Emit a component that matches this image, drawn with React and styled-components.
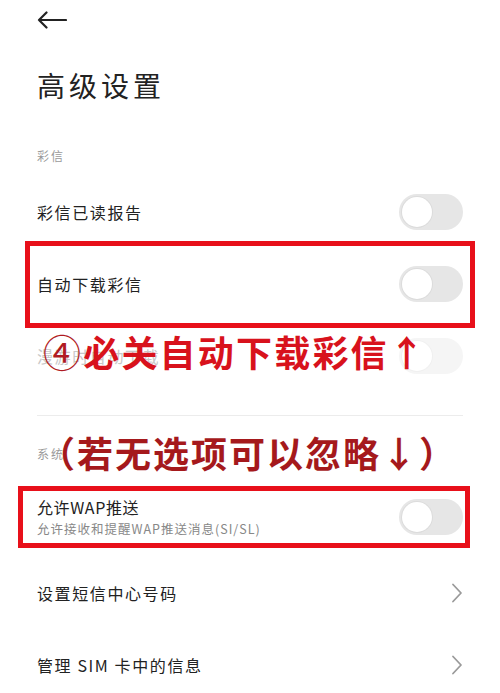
import React from "react";
import styled, { createGlobalStyle } from "styled-components";

const GlobalStyle = createGlobalStyle`
  html, body {
    margin: 0;
    padding: 0;
    background: #fff;
    overflow: hidden;
  }
  body {
    font-family: "Noto Sans CJK SC", "Noto Sans", sans-serif;
    color: #222;
  }
`;

const Page = styled.div`
  width: 500px;
  height: 693px;
  padding: 0 37px;
  box-sizing: border-box;
  overflow: hidden;
`;

const Header = styled.div`
  height: 40px;
  display: flex;
  align-items: center;
  svg {
    display: block;
  }
`;

const Title = styled.h1`
  margin: 25px 0 0;
  font-size: 28px;
  line-height: 40px;
  font-weight: 400;
  letter-spacing: 4px;
  color: #222;
`;

const SectionLabel = styled.div`
  position: relative;
  margin-top: ${(p) => p.top}px;
  margin-bottom: ${(p) => p.bottom}px;
  font-size: 12px;
  line-height: 18px;
  letter-spacing: 2px;
  color: #9a9a9a;
`;

const Row = styled.div`
  position: relative;
  height: ${(p) => (p.tall ? 80 : 72)}px;
  display: flex;
  align-items: center;
  justify-content: space-between;
`;

const RowText = styled.div`
  display: flex;
  flex-direction: column;
  gap: 4px;
`;

const RowTitle = styled.div`
  font-size: 16px;
  line-height: 20px;
  letter-spacing: ${(p) => (p.tight ? 0.6 : 1.6)}px;
  color: ${(p) => (p.disabled ? "#c8c8c8" : "#222")};
`;

const RowSub = styled.div`
  font-size: 12.5px;
  line-height: 16px;
  letter-spacing: 1px;
  color: #888;
`;

const Track = styled.div`
  width: 64px;
  height: 36px;
  border-radius: 18px;
  background: ${(p) => (p.disabled ? "#f5f5f5" : "#e6e6e6")};
  padding: 3px;
  box-sizing: border-box;
  flex-shrink: 0;
`;

const Knob = styled.div`
  width: 30px;
  height: 30px;
  border-radius: 50%;
  background: #fff;
  box-shadow: 0 0 0 1px ${(p) => (p.disabled ? "#f0f0f0" : "#dcdcdc")};
`;

const Divider = styled.div`
  margin-top: 23px;
  height: 1px;
  background: #ececec;
`;

const Frame = styled.div`
  position: absolute;
  top: ${(p) => p.t}px;
  bottom: ${(p) => p.b}px;
  left: ${(p) => p.l}px;
  right: ${(p) => p.r}px;
  border: 5px solid #e8101a;
  pointer-events: none;
`;

const Callout = styled.div`
  position: absolute;
  top: ${(p) => p.top}px;
  left: ${(p) => p.left}px;
  white-space: nowrap;
  font-size: 36px;
  line-height: 40px;
  font-weight: 700;
  letter-spacing: ${(p) => p.spacing || 0}px;
  color: ${(p) => p.color};
`;

const Circled = styled.span`
  font-weight: 400;
  font-size: 38px;
  color: #b01a22;
`;

const Switch = ({ disabled }) => (
  <Track disabled={disabled}>
    <Knob disabled={disabled} />
  </Track>
);

const Chevron = () => (
  <svg width="12" height="20" viewBox="0 0 12 20" fill="none">
    <path d="M2 1.5 L10 10 L2 18.5" stroke="#9a9a9a" strokeWidth="1.8" strokeLinecap="round" strokeLinejoin="round" />
  </svg>
);

const BackArrow = () => (
  <svg width="30" height="18" viewBox="0 0 30 18" fill="none">
    <path d="M29 9 H2 M9.5 1.5 L2 9 L9.5 16.5" stroke="#222" strokeWidth="2.2" strokeLinecap="round" strokeLinejoin="round" />
  </svg>
);

export default function App() {
  return (
    <>
      <GlobalStyle />
      <Page>
        <Header>
          <BackArrow />
        </Header>
        <Title>高级设置</Title>

        <SectionLabel top={42} bottom={11}>彩信</SectionLabel>
        <Row>
          <RowTitle>彩信已读报告</RowTitle>
          <Switch />
        </Row>
        <Row>
          <Frame t={-7} b={-8} l={-12} r={-12} />
          <RowTitle>自动下载彩信</RowTitle>
          <Switch />
        </Row>
        <Row>
          <RowTitle disabled>漫游时自动下载</RowTitle>
          <Switch disabled />
          <Callout top={11} left={6} spacing={2.2} color="#d8121c">
            <Circled>④</Circled>必关自动下载彩信↑
          </Callout>
        </Row>

        <Divider />

        <SectionLabel top={29} bottom={14}>
          系统
          <Callout top={-13} left={2} spacing={2} color="#a5191c">
            （若无选项可以忽略↓）
          </Callout>
        </SectionLabel>
        <Row tall>
          <Frame t={9} b={9} l={-19} r={-7} />
          <RowText>
            <RowTitle tight>允许WAP推送</RowTitle>
            <RowSub>允许接收和提醒WAP推送消息(SI/SL)</RowSub>
          </RowText>
          <Switch />
        </Row>
        <Row>
          <RowTitle>设置短信中心号码</RowTitle>
          <Chevron />
        </Row>
        <Row>
          <RowTitle>管理 SIM 卡中的信息</RowTitle>
          <Chevron />
        </Row>
      </Page>
    </>
  );
}
